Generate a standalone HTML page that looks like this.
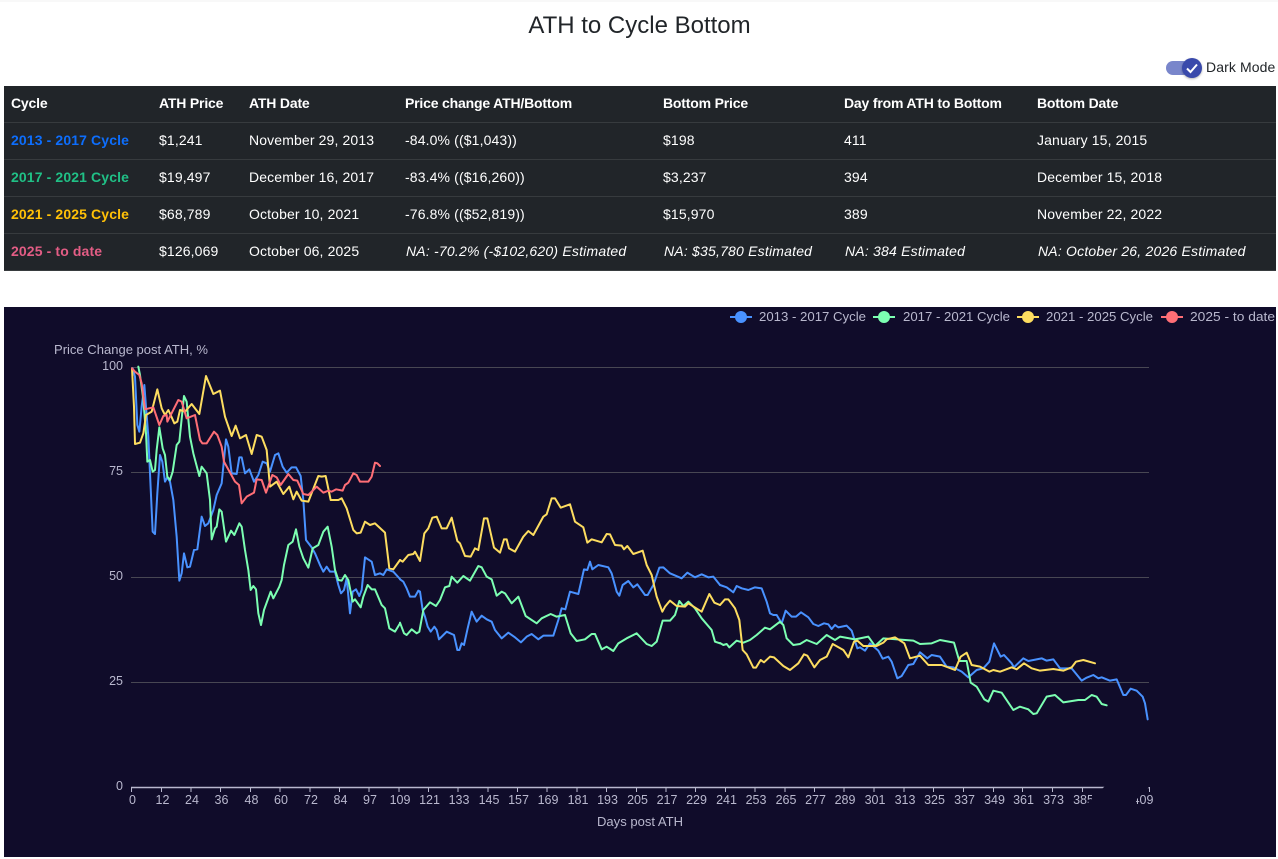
<!DOCTYPE html>
<html><head><meta charset="utf-8"><title>ATH to Cycle Bottom</title>
<style>
html,body{margin:0;padding:0;background:#fff;width:1278px;height:859px;overflow:hidden;font-family:"Liberation Sans",sans-serif;color:#212529}
.topstrip{position:absolute;left:0;top:0;width:1278px;height:2px;background:#f8f8f8}
h1{position:absolute;left:0;width:1279px;top:11px;margin:0;text-align:center;font-size:24px;line-height:29px;font-weight:400}
.toggle{position:absolute;left:1166px;top:57px;width:40px;height:22px}
.track{position:absolute;left:0;top:4px;width:24px;height:14px;border-radius:7px;background:#7986cb}
.knob{position:absolute;left:16px;top:1px;width:20px;height:20px;border-radius:50%;background:#3949ab;box-shadow:0 1px 2px rgba(0,0,0,.3)}
.lbl{position:absolute;left:1206px;top:59px;font-size:14px;line-height:17px;white-space:nowrap;letter-spacing:.1px}
table{position:absolute;left:4px;top:86px;width:1272px;height:185px;border-collapse:collapse;table-layout:fixed;background:#212529;color:#fff;font-size:14px;letter-spacing:.13px}
td,th{padding:0 0 2px 7px;height:34px;border-bottom:1px solid #373b3e;text-align:left;white-space:nowrap;overflow:hidden}
th{font-weight:700;letter-spacing:-.18px}
td.c{font-weight:700;letter-spacing:.12px}
td i{padding-left:1px;letter-spacing:.2px}
svg{position:absolute;left:0;top:0}
</style></head><body>
<div class="topstrip"></div>
<h1>ATH to Cycle Bottom</h1>
<div class="toggle"><div class="track"></div><div class="knob"><svg width="20" height="20" viewBox="0 0 20 20"><path d="M5 10.5l3.5 3.5L15 6.5" fill="none" stroke="#fff" stroke-width="2"/></svg></div></div>
<div class="lbl">Dark Mode</div>
<table>
<colgroup><col style="width:148px"><col style="width:90px"><col style="width:156px"><col style="width:258px"><col style="width:181px"><col style="width:193px"><col style="width:246px"></colgroup>
<tr><th>Cycle</th><th>ATH Price</th><th>ATH Date</th><th>Price change ATH/Bottom</th><th>Bottom Price</th><th>Day from ATH to Bottom</th><th>Bottom Date</th></tr>
<tr><td class="c" style="color:#0d6efd">2013 - 2017 Cycle</td><td>$1,241</td><td>November 29, 2013</td><td>-84.0% (($1,043))</td><td>$198</td><td>411</td><td>January 15, 2015</td></tr>
<tr><td class="c" style="color:#20c086">2017 - 2021 Cycle</td><td>$19,497</td><td>December 16, 2017</td><td>-83.4% (($16,260))</td><td>$3,237</td><td>394</td><td>December 15, 2018</td></tr>
<tr><td class="c" style="color:#ffc107">2021 - 2025 Cycle</td><td>$68,789</td><td>October 10, 2021</td><td>-76.8% (($52,819))</td><td>$15,970</td><td>389</td><td>November 22, 2022</td></tr>
<tr><td class="c" style="color:#e35d85">2025 - to date</td><td>$126,069</td><td>October 06, 2025</td><td><i>NA: -70.2% (-$102,620) Estimated</i></td><td><i>NA: $35,780 Estimated</i></td><td><i>NA: 384 Estimated</i></td><td><i>NA: October 26, 2026 Estimated</i></td></tr>
</table>
<svg width="1278" height="859" viewBox="0 0 1278 859" style="pointer-events:none">
<defs><clipPath id="cc"><rect x="4" y="307" width="1272" height="550"/></clipPath></defs>
<rect x="4" y="307" width="1272" height="550" fill="#100c2a"/>
<g stroke="#484753" stroke-width="1">
<path d="M131 367.5H1149M131 472.5H1149M131 577.5H1149M131 682.5H1149"/>
</g>
<g fill="none" stroke-width="6" stroke-linejoin="round" stroke-linecap="round">
<g stroke="#4992ff">
<polyline transform="translate(40 340) scale(.33333)" points="278,85 285,110 292,255 298,275 305,200 313,135 318,200 325,290 330,400 338,575 345,582 352,460 360,345 367,365 375,425 382,412 390,425 400,480 410,590 418,722 425,700 432,640 442,682 450,680 462,630 472,628 485,530 495,558 505,550 520,510 530,465 545,430 558,298 565,320 575,400 590,402 598,352 605,352 615,400 628,388 642,425 655,405 668,365 680,370 690,395 705,345 715,340 728,380 740,398 755,382 768,382 782,408 790,480 798,600 815,622 825,640 840,675 850,695 860,680 870,695 885,695 895,735 903,760 912,750 920,715 930,820 938,755 948,748 958,768 965,750 975,652 995,665 1005,705 1020,700 1030,705 1040,688 1060,695 1080,717"/>
<polyline transform="translate(380 480) scale(.33333)" points="60,298 70,305 80,325 90,350 105,350 115,332 120,335 128,390 135,410 143,440 152,455 163,440 170,450 177,478 190,465 200,455 222,465 232,510 238,510 245,490 252,495 263,445 275,395 290,425 305,407 320,418 335,425 345,450 365,475 385,458 405,472 423,487 440,470 455,462 475,478 490,467 520,467 535,420 545,385 556,388 570,335 595,342 612,268 622,270 630,245 637,268 655,255 685,262 695,280 710,335 718,347 728,315 745,303 760,322 772,313 795,345 803,345 820,315 838,263 850,262 870,280 905,295 922,278 945,292 965,283 985,292 1000,290 1020,315"/>
<polyline transform="translate(720 560) scale(.33333)" points="0,75 20,82 40,97 50,78 65,85 85,90 105,82 125,85 140,125 150,160 160,165 170,165 185,190 197,152 215,170 228,170 243,157 265,172 280,192 295,198 312,190 325,193 335,207 345,195 355,202 380,197 395,212 412,265 420,262 435,272 450,250 475,272 488,296 505,290 515,305 532,355 545,348 565,315 580,312 600,277 622,295 635,285 660,290 680,320 700,322 725,335 745,352 770,330 790,325 808,305 822,250 842,290 852,285 875,310 882,322 910,295 925,303 965,295 980,302 1000,298 1020,325 1055,325 1085,362 1100,353 1120,345 1135,355 1145,352 1170,362 1190,358 1210,405 1218,405 1232,386 1250,392 1268,410 1275,430 1283,478"/>
</g>
<g stroke="#7cffb2">
<polyline transform="translate(40 340) scale(.33333)" points="295,80 300,105 310,180 318,280 322,365 330,360 338,395 345,390 350,330 358,262 368,325 375,345 382,410 390,420 398,395 410,315 418,305 432,168 440,185 450,290 460,340 478,408 485,380 500,400 510,480 515,598 525,565 530,560 538,508 545,515 558,605 573,572 583,585 598,550 605,560 615,630 625,690 632,750 640,738 648,748 655,820 663,855 672,810 692,755 700,775 718,740 725,720 732,675 745,615 758,605 768,568 778,620 790,655 805,683 818,625 835,615 850,575 863,560 875,620 885,690 895,720 905,722 915,705 925,720 938,785 945,778 962,802 970,770 983,735 995,748 1005,748 1025,795 1035,805 1048,865 1065,875 1080,850"/>
<polyline transform="translate(380 480) scale(.33333)" points="60,428 72,460 80,465 95,448 110,460 118,455 130,390 150,367 168,378 180,360 195,322 208,318 215,290 232,308 250,288 270,302 295,258 305,262 320,290 335,298 350,347 365,335 375,340 395,370 415,350 437,408 470,430 485,415 512,402 530,410 555,405 572,460 590,483 615,478 635,462 645,462 665,508 680,500 700,513 715,490 740,475 770,460 800,492 815,498 830,485 848,422 870,422 885,405 898,363 910,378 925,365 945,385 965,415 995,450 1005,485 1020,490"/>
<polyline transform="translate(720 560) scale(.33333)" points="0,249 10,255 20,252 28,262 50,242 70,248 90,240 110,225 135,203 150,208 180,185 190,195 200,235 220,255 240,252 260,240 290,252 320,225 345,240 360,230 405,238 445,230 465,258 490,235 580,242 600,252 635,250 660,240 702,248 718,303 740,303 752,368 770,380 793,418 805,425 820,392 845,398 880,450 900,440 925,448 940,462 950,460 980,410 1005,405 1030,427 1075,420 1095,420 1115,405 1130,410 1145,432 1160,436"/>
</g>
<g stroke="#fddd60">
<polyline transform="translate(40 340) scale(.33333)" points="276,85 282,200 285,312 300,308 310,280 318,225 335,215 352,148 365,205 375,225 385,210 392,225 403,250 412,245 420,210 435,215 455,192 478,222 498,108 520,162 540,152 555,230 575,288 587,257 600,295 618,285 635,342 650,285 665,290 680,330 690,440 710,425 730,462 748,440 760,478 770,455 785,482 805,485 835,408 845,410 857,408 872,480 895,480 905,475 920,505 940,570 950,580 962,578 975,545 990,555 1005,550 1035,578 1048,685 1060,688 1080,660"/>
<polyline transform="translate(380 480) scale(.33333)" points="60,240 68,245 85,225 100,222 105,215 120,243 133,160 145,145 157,113 170,110 185,145 200,145 215,113 232,183 240,190 255,228 272,230 285,205 295,210 312,115 322,115 342,203 360,218 372,178 380,178 387,205 405,215 430,170 445,153 460,165 490,110 500,103 515,55 525,55 542,83 570,73 585,125 610,142 622,188 635,178 665,187 680,162 690,163 705,195 725,197 732,208 742,198 760,222 788,212 800,255 815,285 830,350 847,395 855,380 870,362 890,378 915,380 925,370 965,395 988,342 1003,368 1020,375"/>
<polyline transform="translate(720 560) scale(.33333)" points="0,135 15,118 25,118 45,145 58,180 68,270 80,283 100,323 108,323 122,300 132,307 150,290 162,292 190,318 210,330 235,310 252,283 262,287 283,322 300,300 320,290 338,252 370,270 385,292 402,245 412,242 430,258 470,258 490,248 500,238 525,232 553,250 570,295 600,287 625,315 665,315 705,330 722,290 740,278 755,315 780,320 808,335 820,330 840,335 875,322 890,328 912,310 935,325 960,332 1000,327 1030,332 1055,322 1068,305 1090,300 1125,310"/>
</g>
<g stroke="#ff6e76">
<polyline transform="translate(40 340) scale(.33333)" points="276,85 285,95 298,105 305,130 315,208 340,202 358,255 370,228 380,225 382,245 415,180 425,185 440,235 465,225 480,300 487,310 500,310 522,275 532,285 545,320 552,365 585,425 597,435 605,490 620,470 642,458 650,418 665,420 678,458 697,405 710,412 722,435 745,402 760,420 772,422 790,462 805,465 830,440 850,458 865,452 875,455 888,448 908,452 915,435 925,428 940,400 950,405 960,425 985,425 995,410 1005,368 1012,370 1020,378"/>
</g>
</g>
<path d="M131 787.5H1149" stroke="#b9b8ce" stroke-width="1.5"/>
<path stroke="#b9b8ce" stroke-width="1" d="M131.5 787v5M161.5 787v5M191 787v5M220.5 787v5M250.5 787v5M280 787v5M310 787v5M339.5 787v5M369 787v5M399 787v5M428.5 787v5M458 787v5M488 787v5M517.5 787v5M547 787v5M577 787v5M606.5 787v5M636.5 787v5M666 787v5M695.5 787v5M725.5 787v5M755 787v5M785 787v5M814.5 787v5M844 787v5M874 787v5M904 787v5M933.5 787v5M963.5 787v5M993.5 787v5M1022.5 787v5M1052.5 787v5M1082.5 787v5M1149.5 787v5"/>
<g font-family="'Liberation Sans',sans-serif" font-size="12.5" fill="#b9b8ce">
<g text-anchor="end">
<text x="123" y="370">100</text><text x="123" y="475">75</text><text x="123" y="580">50</text><text x="123" y="685">25</text><text x="123" y="790">0</text>
</g>
<text x="54" y="354" font-size="13" textLength="154" lengthAdjust="spacingAndGlyphs">Price Change post ATH, %</text>
<text x="597" y="826" font-size="13" textLength="86" lengthAdjust="spacingAndGlyphs">Days post ATH</text>
<g text-anchor="middle">
<text x="132.5" y="804">0</text><text x="162.5" y="804">12</text><text x="192" y="804">24</text><text x="221.5" y="804">36</text><text x="251.5" y="804">48</text><text x="281" y="804">60</text><text x="311" y="804">72</text><text x="340.5" y="804">84</text><text x="370" y="804">97</text><text x="400" y="804">109</text><text x="429.5" y="804">121</text><text x="459" y="804">133</text><text x="489" y="804">145</text><text x="518.5" y="804">157</text><text x="548" y="804">169</text><text x="578" y="804">181</text><text x="607.5" y="804">193</text><text x="637.5" y="804">205</text><text x="667" y="804">217</text><text x="696.5" y="804">229</text><text x="726.5" y="804">241</text><text x="756" y="804">253</text><text x="786" y="804">265</text><text x="815.5" y="804">277</text><text x="845" y="804">289</text><text x="875" y="804">301</text><text x="905" y="804">313</text><text x="934.5" y="804">325</text><text x="964.5" y="804">337</text><text x="994.5" y="804">349</text><text x="1023.5" y="804">361</text><text x="1053.5" y="804">373</text><text x="1083.5" y="804">385</text><text x="1143" y="804">409</text>
</g>
</g>
<g clip-path="url(#cc)">
<polygon points="1040,851 1278,613 1278,658 1120,816 1060,876" fill="#100c2a"/>
<polygon points="1092,790 1092,810 1136,810 1136,790" fill="#100c2a"/>
</g>
<g stroke-width="2" font-family="'Liberation Sans',sans-serif" font-size="13">
<path d="M730 317h22" stroke="#4992ff"/><circle cx="741" cy="317" r="6" fill="#4992ff"/>
<text x="759" y="321" fill="#b9b8ce" textLength="107" lengthAdjust="spacingAndGlyphs" stroke="none">2013 - 2017 Cycle</text>
<path d="M873 317h22" stroke="#7cffb2"/><circle cx="884" cy="317" r="6" fill="#7cffb2"/>
<text x="903" y="321" fill="#b9b8ce" textLength="107" lengthAdjust="spacingAndGlyphs" stroke="none">2017 - 2021 Cycle</text>
<path d="M1017 317h22" stroke="#fddd60"/><circle cx="1028" cy="317" r="6" fill="#fddd60"/>
<text x="1046" y="321" fill="#b9b8ce" textLength="107" lengthAdjust="spacingAndGlyphs" stroke="none">2021 - 2025 Cycle</text>
<path d="M1161 317h22" stroke="#ff6e76"/><circle cx="1172" cy="317" r="6" fill="#ff6e76"/>
<text x="1190" y="321" fill="#b9b8ce" textLength="85" lengthAdjust="spacingAndGlyphs" stroke="none">2025 - to date</text>
</g>
</svg>
</body></html>
